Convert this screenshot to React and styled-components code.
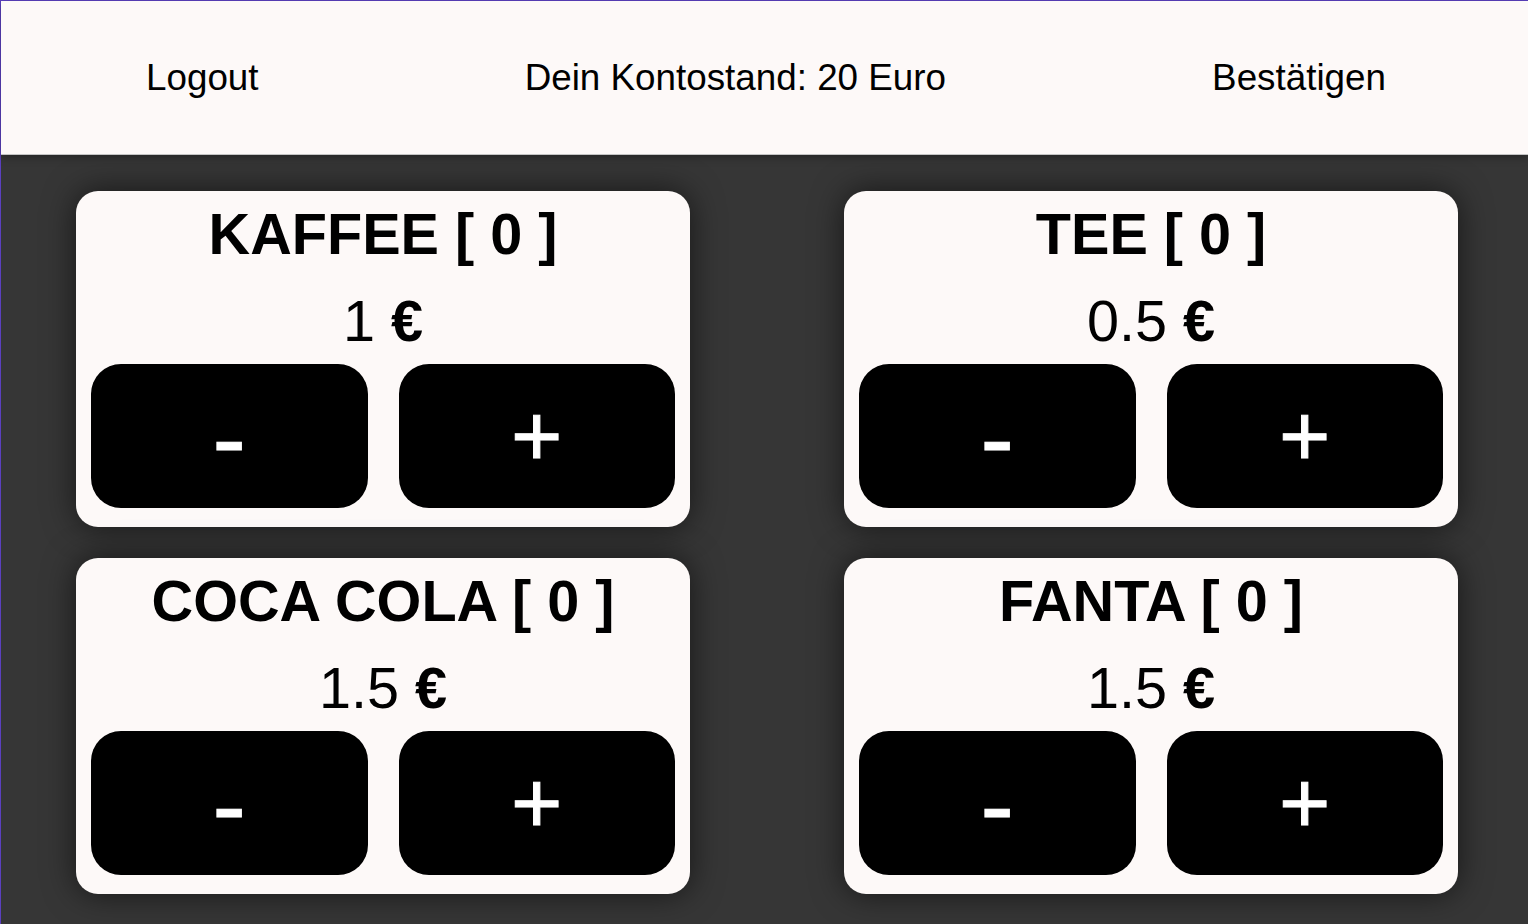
import React, { useState } from 'react'
import styled, { createGlobalStyle } from 'styled-components'

const GlobalStyle = createGlobalStyle`
  html, body {
    margin: 0;
    padding: 0;
    background: #363636;
  }
  body {
    font-family: "Liberation Sans", Arial, sans-serif;
  }
`

const drinks = [
  { id: 'kaffee', name: 'KAFFEE', price: 1 },
  { id: 'tee', name: 'TEE', price: 0.5 },
  { id: 'cola', name: 'COCA COLA', price: 1.5 },
  { id: 'fanta', name: 'FANTA', price: 1.5 },
]

export default function App() {
  const [counts, setCounts] = useState({})

  function handleChange(id, delta) {
    setCounts((prev) => {
      const next = Math.max(0, (prev[id] || 0) + delta)
      return { ...prev, [id]: next }
    })
  }

  return (
    <Frame>
      <GlobalStyle />
      <Header>
        <HeaderLink>Logout</HeaderLink>
        <HeaderText>Dein Kontostand: 20 Euro</HeaderText>
        <HeaderLink>Bestätigen</HeaderLink>
      </Header>
      <Grid>
        {drinks.map((drink) => (
          <Card key={drink.id}>
            <Title>
              {drink.name} [ {counts[drink.id] || 0} ]
            </Title>
            <Price>
              {drink.price} <Euro>€</Euro>
            </Price>
            <Buttons>
              <CountButton minus onClick={() => handleChange(drink.id, -1)}>
                -
              </CountButton>
              <CountButton onClick={() => handleChange(drink.id, 1)}>+</CountButton>
            </Buttons>
          </Card>
        ))}
      </Grid>
    </Frame>
  )
}

const Frame = styled.div`
  min-height: 922px;
  border-left: 1px solid #5b40bf;
  border-top: 1px solid #5b40bf;
  border-bottom: 1px solid #5b40bf;
  background: #363636;
`

const Header = styled.header`
  height: 153px;
  background: #fdf9f8;
  display: flex;
  align-items: center;
  justify-content: space-between;
  padding: 0 142px 0 145px;
  box-shadow: 0 1px 0 #c4c4c4, 0 3px 8px rgba(0, 0, 0, 0.35);
  position: relative;
  z-index: 1;
`

const HeaderLink = styled.span`
  font-size: 36.8px;
  color: #000;
  cursor: pointer;
`

const HeaderText = styled.span`
  font-size: 36.8px;
  color: #000;
`

const Grid = styled.main`
  display: grid;
  grid-template-columns: 614px 614px;
  column-gap: 154px;
  row-gap: 31px;
  padding: 37px 70px 31px 75px;
`

const Card = styled.section`
  background: #fdf9f8;
  border-radius: 22px;
  padding: 11px 15px 19px;
  box-shadow: 0 0 32px rgba(0, 0, 0, 0.6);
  display: flex;
  flex-direction: column;
  align-items: stretch;
  text-align: center;
`

const Title = styled.h2`
  margin: 0;
  font-size: 57.6px;
  line-height: 64px;
  font-weight: bold;
  color: #000;
`

const Price = styled.div`
  margin-top: 23px;
  font-size: 57.6px;
  line-height: 64px;
  color: #000;
`

const Euro = styled.b`
  font-weight: bold;
`

const Buttons = styled.div`
  margin-top: 11px;
  display: grid;
  grid-template-columns: 1fr 1fr;
  column-gap: 31px;
`

const CountButton = styled.button`
  height: 144px;
  border: none;
  border-radius: 30px;
  background: #000;
  color: #fff;
  font-family: "Liberation Sans", Arial, sans-serif;
  font-weight: normal;
  font-size: ${(p) => (p.minus ? '100px' : '88px')};
  -webkit-text-stroke: 1px #fff;
  line-height: 1;
  padding: ${(p) => (p.minus ? '4px 0 0' : '0')};
  cursor: pointer;
`
